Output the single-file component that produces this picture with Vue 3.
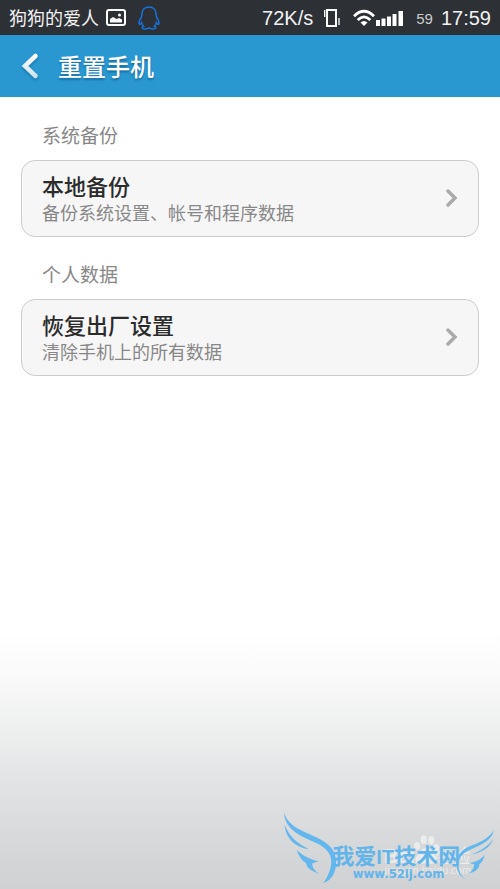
<script setup>
const sections = [
  { label: '系统备份', title: '本地备份', note: '备份系统设置、帐号和程序数据' },
  { label: '个人数据', title: '恢复出厂设置', note: '清除手机上的所有数据' },
]
</script>

<template>
  <div class="screen">
    <div class="status">
      <span class="carrier">狗狗的爱人</span>
      <svg class="picture" width="20" height="18" viewBox="0 0 20 18">
        <rect x="1" y="1" width="18" height="15" rx="2" fill="none" stroke="#fff" stroke-width="2" />
        <path d="M4 13.500V10l3-2 3.500 2 2.500-1 3 1.500v3z" fill="#fff" />
        <circle cx="13.500" cy="6" r="1.500" fill="#fff" />
      </svg>
      <svg class="penguin" width="22" height="24" viewBox="0 0 22 24">
        <path d="M11 1C6.500 1 4 4 4 8c0 1-.2 2-.6 3C2 13 1 15 1 17.500c.2 1.500 1.500.8 2.600-.9.300 1.600 1 2.700 2 3.700-2 .6-2 2.500.4 2.700 2 .1 4 0 5-1.200 1 1.200 3 1.300 5 1.200 2.400-.2 2.400-2.100.4-2.700 1-1 1.700-2.100 2-3.700 1.100 1.700 2.400 2.400 2.600.9 0-2.500-1-4.500-2.400-6.500-.4-1-.6-2-.6-3 0-4-2.500-7-7-7z" fill="none" stroke="#1672dc" stroke-width="1.500" />
      </svg>
      <span class="speed">72K/s</span>
      <svg class="vibrate" width="16" height="18" viewBox="0 0 16 18">
        <path d="M3 1h9v16H3z" fill="none" stroke="#fff" stroke-width="2" />
        <path d="M.7 1v7M15 9v7" stroke="#fff" stroke-width="1.300" />
      </svg>
      <svg class="signal" width="50" height="18" viewBox="0 0 50 18">
        <g fill="none" stroke="#fff" stroke-width="2.700">
          <path d="M1 7.200Q11-2.600 21 7.200M4.700 11Q11 4.600 17.300 11" />
        </g>
        <path d="M7.500 13.600Q11 10.500 14.500 13.600L11 17z" fill="#fff" />
        <path d="M23 11h4v6h-4zM28.500 9.500h4V17h-4zM34 7.500h4V17h-4zM39.500 5h4v12h-4zM45.500 2H50v15h-4.500z" fill="#fff" />
      </svg>
      <span class="battery">59</span>
      <span class="clock">17:59</span>
    </div>

    <header class="bar">
      <button class="back" type="button" aria-label="返回">
        <svg width="18" height="28" viewBox="0 0 18 28">
          <defs>
            <linearGradient id="arrow" x1="0" y1="0" x2="0" y2="1">
              <stop offset="0" stop-color="#fff" />
              <stop offset="1" stop-color="#cbe4f2" />
            </linearGradient>
          </defs>
          <path d="M14.500 4L4 14l10.500 10" fill="none" stroke="url(#arrow)" stroke-width="4.500" stroke-linecap="round" />
        </svg>
      </button>
      <h1>重置手机</h1>
    </header>

    <main>
      <section v-for="s in sections" :key="s.label">
        <h2>{{ s.label }}</h2>
        <button class="card" type="button">
          <span class="texts">
            <span class="title">{{ s.title }}</span>
            <span class="note">{{ s.note }}</span>
          </span>
          <svg width="12" height="18" viewBox="0 0 12 18">
            <path d="M2 2l7 7-7 7" fill="none" stroke="#aaa" stroke-width="3.500" stroke-linecap="round" />
          </svg>
        </button>
      </section>
    </main>

    <svg class="mark" width="220" height="80" viewBox="30 27 660 240">
      <g class="under">
        <text x="342" y="190" class="brand">Bai</text>
        <text x="488" y="190" class="brand-cn">经验</text>
        <text x="344" y="222" class="host">jingyan.baidu.com</text>
        <ellipse cx="441" cy="138" rx="9" ry="12" />
        <ellipse cx="461" cy="119" rx="9" ry="13" />
        <ellipse cx="484" cy="121" rx="9" ry="13" />
        <ellipse cx="499" cy="143" rx="9" ry="11" />
        <path d="M468 143c14 0 16 14 27 24 10 12 4 25-10 24-12-2-22-2-34 0-14 1-20-12-10-24 11-10 13-24 27-24z" />
      </g>
      <g class="wings">
        <path d="M42 38C58 88 112 94 158 122C196 145 202 174 197 202C193 227 178 244 160 249C180 222 192 184 177 160C160 130 119 124 87 104C58 86 43 64 42 38z" />
        <path d="M44 74C57 108 80 129 116 147C80 143 47 118 44 74z" />
        <path d="M80 149C96 166 116 176 146 184L127 190C126 203 134 212 148 222C119 211 110 202 108 190C95 180 85 166 80 149z" />
        <path d="M672 91C665 119 641 132 605 147C574 160 562 178 566 202C568 220 576 231 588 237C565 230 557 204 561 180C566 154 590 141 617 132C645 121 660 108 672 91z" />
        <path d="M670 117C660 143 637 158 603 164C634 152 654 139 670 117z" />
        <path d="M644 164C634 178 620 185 598 189L612 193C613 205 606 214 594 222C616 216 628 207 628 193C636 187 642 177 644 164z" />
      </g>
      <text x="187" y="192" class="site">我爱<tspan class="latin">IT</tspan>技术网</text>
      <text x="248" y="234" class="url">www.52ij.com</text>
    </svg>
  </div>
</template>

<style>
body {
  margin: 0;
}
</style>

<style scoped>
.screen {
  position: relative;
  min-height: 100vh;
  box-sizing: border-box;
  overflow: hidden;
  font-family: "Noto Sans CJK SC", sans-serif;
  background: linear-gradient(#fff 0, #fff 71%, #fafafa 76%, #eeefef 82%, #e2e3e4 88%, #d8d9da 94%, #d0d1d2 100%);
}
.status {
  display: flex;
  align-items: center;
  height: 35px;
  padding: 0 9px;
  background: #2d3035;
  color: #f2f2f2;
  white-space: nowrap;
}
.carrier {
  font-size: 18px;
  line-height: 26px;
  padding-bottom: 2px;
}
.picture {
  margin-left: 7px;
}
.penguin {
  margin-left: 12px;
}
.speed,
.battery,
.clock {
  font-family: "Liberation Sans", sans-serif;
  padding-top: 2px;
}
.speed {
  margin-left: auto;
  font-size: 20px;
}
.vibrate {
  margin-left: 11px;
}
.signal {
  margin-left: 13px;
}
.battery {
  margin-left: 13px;
  font-size: 15px;
  color: #ccc;
}
.clock {
  margin-left: 8px;
  font-size: 20px;
}
.bar {
  display: flex;
  align-items: center;
  height: 62px;
  padding-left: 21px;
  background: #2997d0;
}
.back {
  display: flex;
  padding: 0;
  border: 0;
  background: none;
  filter: drop-shadow(0 2px 1px rgba(0, 50, 90, 0.3));
}
h1 {
  margin: 0 0 0 19px;
  font-size: 24px;
  line-height: 32px;
  font-weight: 500;
  color: #fff;
  text-shadow: 0 2px 2px rgba(0, 50, 90, 0.4);
}
main {
  display: flex;
  flex-direction: column;
  gap: 23px;
  padding: 24px 21px;
}
h2 {
  margin: 0 0 11px 21px;
  font-size: 19px;
  line-height: 28px;
  font-weight: 400;
  color: #888;
}
.card {
  display: flex;
  align-items: center;
  justify-content: space-between;
  width: 100%;
  padding: 10px 20px 11px;
  border: 1px solid #ccc;
  border-radius: 14px;
  background: #f6f6f6;
  font-family: inherit;
  text-align: left;
}
.texts {
  display: flex;
  flex-direction: column;
}
.title {
  font-size: 22px;
  line-height: 28px;
  font-weight: 500;
  color: #2b2b2b;
}
.note {
  font-size: 18px;
  line-height: 26px;
  font-weight: 400;
  color: #888;
}
.mark {
  position: absolute;
  right: 0;
  bottom: 0;
}
.under {
  fill: #f0f1f1;
  opacity: 0.8;
}
.brand {
  font: bold 60px "Liberation Sans", sans-serif;
}
.brand-cn {
  font-size: 57px;
}
.host {
  font: 30px "Noto Sans", sans-serif;
}
.wings {
  fill: #62b7ee;
}
.site {
  font-size: 66px;
  font-weight: 700;
  fill: #62b5eb;
}
.latin {
  font-family: "Liberation Sans", sans-serif;
  font-size: 60px;
}
.url {
  font: bold 35px "DejaVu Sans", sans-serif;
  fill: #62b5eb;
}
</style>
